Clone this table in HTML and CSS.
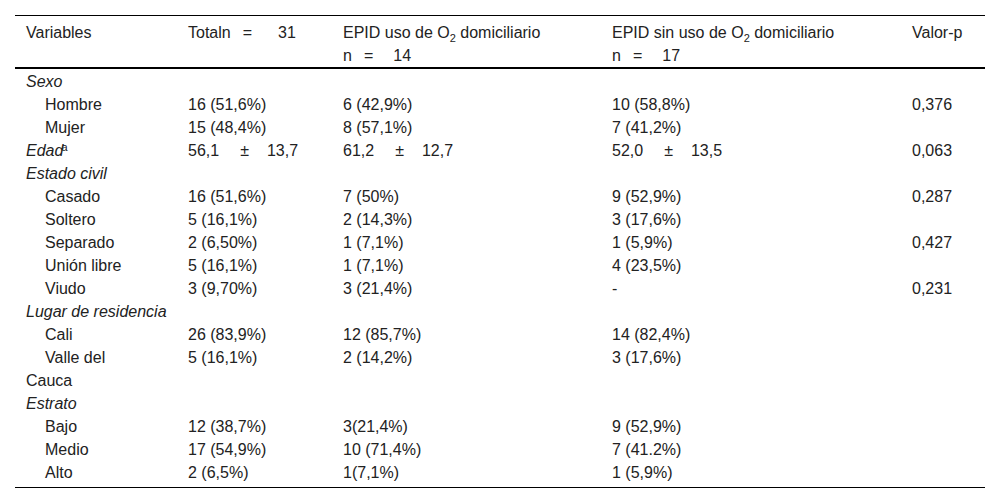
FILE: index.html
```html
<!DOCTYPE html>
<html lang="es">
<head>
<meta charset="utf-8">
<title>Tabla</title>
<link rel="stylesheet" href="styles.css">
</head>
<body>
<div class="wrap">
<table class="tbl">
  <colgroup>
    <col class="c1"><col class="c2"><col class="c3"><col class="c4"><col class="c5">
  </colgroup>
  <thead>
    <tr>
      <th>Variables</th>
      <th>Totaln<span class="eq wide">=</span>31</th>
      <th>EPID uso de O<sub>2</sub> domiciliario<br>n<span class="eq">=</span>14</th>
      <th>EPID sin uso de O<sub>2</sub> domiciliario<br>n<span class="eq">=</span>17</th>
      <th>Valor-p</th>
    </tr>
  </thead>
  <tbody>
    <tr class="first"><td class="cat">Sexo</td><td></td><td></td><td></td><td></td></tr>
    <tr><td class="ind">Hombre</td><td>16 (51,6%)</td><td>6 (42,9%)</td><td>10 (58,8%)</td><td>0,376</td></tr>
    <tr><td class="ind">Mujer</td><td>15 (48,4%)</td><td>8 (57,1%)</td><td>7 (41,2%)</td><td></td></tr>
    <tr><td class="cat">Edad<sup>a</sup></td><td>56,1<span class="pm">±</span>13,7</td><td>61,2<span class="pm">±</span>12,7</td><td>52,0<span class="pm">±</span>13,5</td><td>0,063</td></tr>
    <tr><td class="cat">Estado civil</td><td></td><td></td><td></td><td></td></tr>
    <tr><td class="ind">Casado</td><td>16 (51,6%)</td><td>7 (50%)</td><td>9 (52,9%)</td><td>0,287</td></tr>
    <tr><td class="ind">Soltero</td><td>5 (16,1%)</td><td>2 (14,3%)</td><td>3 (17,6%)</td><td></td></tr>
    <tr><td class="ind">Separado</td><td>2 (6,50%)</td><td>1 (7,1%)</td><td>1 (5,9%)</td><td>0,427</td></tr>
    <tr><td class="ind">Unión libre</td><td>5 (16,1%)</td><td>1 (7,1%)</td><td>4 (23,5%)</td><td></td></tr>
    <tr><td class="ind">Viudo</td><td>3 (9,70%)</td><td>3 (21,4%)</td><td>-</td><td>0,231</td></tr>
    <tr><td class="cat">Lugar de residencia</td><td></td><td></td><td></td><td></td></tr>
    <tr><td class="ind">Cali</td><td>26 (83,9%)</td><td>12 (85,7%)</td><td>14 (82,4%)</td><td></td></tr>
    <tr><td class="ind">Valle del<br>Cauca</td><td>5 (16,1%)</td><td>2 (14,2%)</td><td>3 (17,6%)</td><td></td></tr>
    <tr><td class="cat">Estrato</td><td></td><td></td><td></td><td></td></tr>
    <tr><td class="ind">Bajo</td><td>12 (38,7%)</td><td>3(21,4%)</td><td>9 (52,9%)</td><td></td></tr>
    <tr><td class="ind">Medio</td><td>17 (54,9%)</td><td>10 (71,4%)</td><td>7 (41.2%)</td><td></td></tr>
    <tr class="last"><td class="ind">Alto</td><td>2 (6,5%)</td><td>1(7,1%)</td><td>1 (5,9%)</td><td></td></tr>
  </tbody>
</table>
</div>
</body>
</html>
```
FILE: styles.css
```css
html, body {
  margin: 0;
  padding: 0;
  background: #ffffff;
}

.wrap {
  padding: 15px;
}

.tbl {
  width: 970px;
  table-layout: fixed;
  border-collapse: separate;
  border-spacing: 0;
  font-family: "Liberation Sans", Arial, sans-serif;
  font-size: 16px;
  line-height: 23px;
  color: #222222;
}

.c1 { width: 162px; }
.c2 { width: 155px; }
.c3 { width: 269px; }
.c4 { width: 300px; }
.c5 { width: 84px; }

.tbl th {
  font-weight: normal;
  text-align: left;
  vertical-align: top;
  padding: 5px 11px 0 11px;
  border-top: 1px solid #000000;
  border-bottom: 2px solid #000000;
}

.tbl td {
  text-align: left;
  vertical-align: top;
  padding: 0 11px;
}

.tbl td:first-child {
  padding-right: 0;
}

.tbl tr.first td {
  padding-top: 1px;
}

.tbl tr.last td {
  padding-bottom: 3px;
  border-bottom: 1px solid #000000;
}

.cat {
  font-style: italic;
}

.ind {
  text-indent: 19px;
}

.eq {
  margin: 0 20px 0 12px;
}

.eq.wide {
  margin-right: 26px;
}

.pm {
  margin: 0 18px 0 21px;
}

sub {
  font-size: 11px;
  line-height: 0;
  vertical-align: -4px;
}

sup {
  font-size: 11px;
  line-height: 0;
  vertical-align: 5px;
  font-style: normal;
  margin-left: -2px;
}
```
